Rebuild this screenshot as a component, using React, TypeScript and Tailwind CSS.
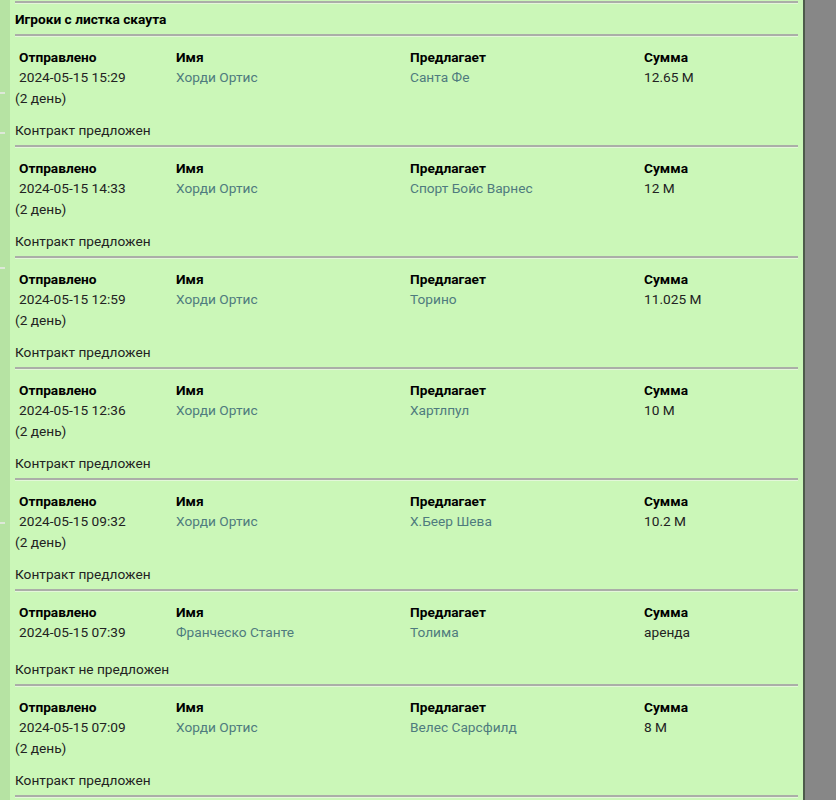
import React from 'react';

type Offer = {
    sent: string;
    days?: string;
    name: string;
    club: string;
    sum: string;
    status: string;
};

const offers: Offer[] = [
    { sent: '2024-05-15 15:29', days: '(2 день)', name: 'Хорди Ортис', club: 'Санта Фе', sum: '12.65 M', status: 'Контракт предложен' },
    { sent: '2024-05-15 14:33', days: '(2 день)', name: 'Хорди Ортис', club: 'Спорт Бойс Варнес', sum: '12 M', status: 'Контракт предложен' },
    { sent: '2024-05-15 12:59', days: '(2 день)', name: 'Хорди Ортис', club: 'Торино', sum: '11.025 M', status: 'Контракт предложен' },
    { sent: '2024-05-15 12:36', days: '(2 день)', name: 'Хорди Ортис', club: 'Хартлпул', sum: '10 M', status: 'Контракт предложен' },
    { sent: '2024-05-15 09:32', days: '(2 день)', name: 'Хорди Ортис', club: 'Х.Беер Шева', sum: '10.2 M', status: 'Контракт предложен' },
    { sent: '2024-05-15 07:39', name: 'Франческо Станте', club: 'Толима', sum: 'аренда', status: 'Контракт не предложен' },
    { sent: '2024-05-15 07:09', days: '(2 день)', name: 'Хорди Ортис', club: 'Велес Сарсфилд', sum: '8 M', status: 'Контракт предложен' },
];

const Separator: React.FC = () => (
    <div className="h-[3px] border-t-2 border-t-[#abaea8] border-b border-b-[#e4f7da]" />
);

const OfferBlock: React.FC<{ offer: Offer }> = ({ offer }) => (
    <div className="pt-[10px] pb-[5px] leading-[20px]">
        <div className="grid grid-cols-[157px_234px_234px_158px]">
            <div className="pl-[4px] font-bold text-black">Отправлено</div>
            <div className="pl-[4px] font-bold text-black">Имя</div>
            <div className="pl-[4px] font-bold text-black">Предлагает</div>
            <div className="pl-[4px] font-bold text-black">Сумма</div>
            <div className="pl-[4px] leading-[21px] text-[#222]">{offer.sent}</div>
            <div className="pl-[4px] leading-[21px] text-[#4f7b7e]">{offer.name}</div>
            <div className="pl-[4px] leading-[21px] text-[#4f7b7e]">{offer.club}</div>
            <div className="pl-[4px] leading-[21px] text-[#222]">{offer.sum}</div>
        </div>
        {offer.days && <div className="leading-[21px] text-[#222]">{offer.days}</div>}
        <div className={offer.days ? 'mt-[11px] text-[#222]' : 'mt-[16px] text-[#222]'}>{offer.status}</div>
    </div>
);

const App: React.FC = () => {
    return (
        <div className="flex h-[800px] w-[836px] overflow-hidden text-[13.7px] font-['Roboto',sans-serif]">
            <div className="relative w-[10px] bg-[#b6e3a3]">
                <div className="absolute left-0 top-[92px] h-[2px] w-[5px] bg-[#dde8d8]" />
                <div className="absolute left-0 top-[132px] h-[2px] w-[5px] bg-[#dde8d8]" />
                <div className="absolute left-0 top-[267px] h-[2px] w-[5px] bg-[#dde8d8]" />
                <div className="absolute left-0 top-[522px] h-[2px] w-[5px] bg-[#dde8d8]" />
            </div>
            <div className="flex-1 bg-[#cbf7b8] px-[5px] pt-[1px]">
                <Separator />
                <div className="py-[5px] leading-[20px] font-bold text-black">Игроки с листка скаута</div>
                {offers.map((offer, i) => (
                    <React.Fragment key={i}>
                        <Separator />
                        <OfferBlock offer={offer} />
                    </React.Fragment>
                ))}
                <Separator />
            </div>
            <div className="w-[2px] bg-[#4d5a4b]" />
            <div className="w-[31px] bg-[#878787]" />
        </div>
    );
};

export default App;
